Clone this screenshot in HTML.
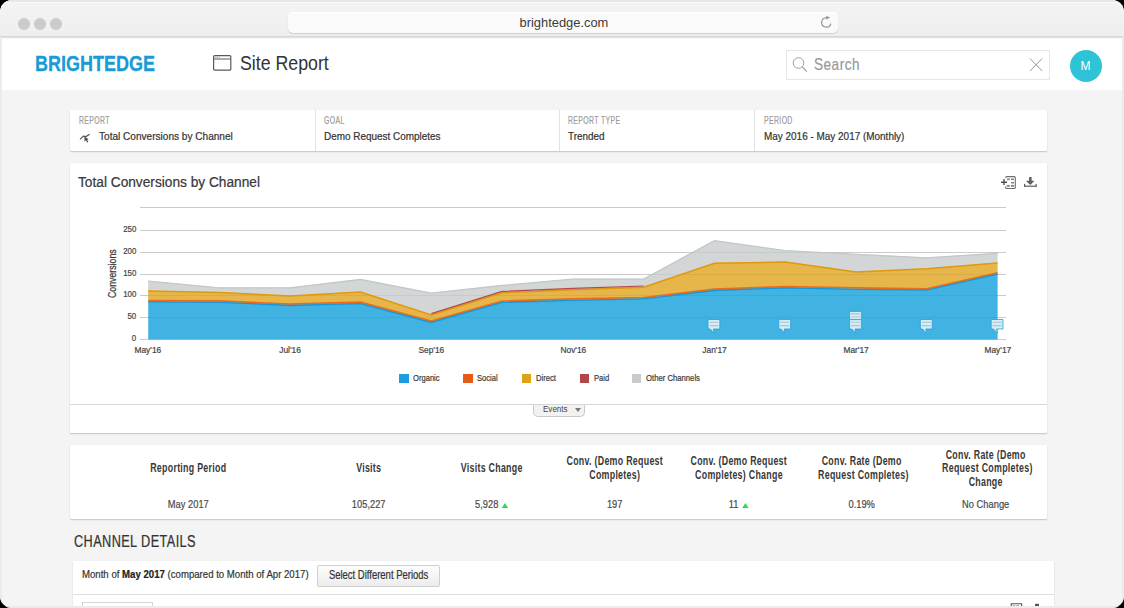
<!DOCTYPE html>
<html><head><meta charset="utf-8">
<style>
*{margin:0;padding:0;box-sizing:border-box}
html,body{width:1124px;height:608px;overflow:hidden;background:#000}
body{font-family:"Liberation Sans",sans-serif;position:relative}
#win{position:absolute;left:0;top:0;width:1124px;height:608px;border-radius:12px;overflow:hidden;background:#f4f4f4}
.a{position:absolute}
.t{position:absolute;white-space:nowrap;line-height:1;transform-origin:0 0;-webkit-text-stroke-width:.22px}
.up{display:inline-block;width:0;height:0;border-left:4.2px solid transparent;border-right:4.2px solid transparent;border-bottom:5.2px solid #2bdc58;vertical-align:0;margin-left:1.2px;-webkit-text-stroke-width:0}
.panel{position:absolute;background:#fff;border-radius:1px;box-shadow:0 1px 1.5px rgba(0,0,0,.2),0 0 1px rgba(0,0,0,.07)}
</style></head>
<body>
<div id="win">
  <!-- title bar -->
  <div class="a" style="left:0;top:0;width:1124px;height:37px;background:linear-gradient(#f4f4f4,#eeeeee)"></div>
  <div class="a" style="left:0;top:0;width:1124px;height:1.5px;background:#e6e6e6"></div>
  <div class="a" style="left:0;top:1.5px;width:1124px;height:1px;background:#fafafa"></div>
  <div class="a" style="left:0;top:36px;width:1124px;height:1px;background:#d8d8d8"></div>
  <div class="a" style="left:0;top:37px;width:1124px;height:1px;background:#e3e3e3"></div>
  <div class="a" style="left:0;top:38px;width:1124px;height:1px;background:#f6f6f6"></div>
  <div class="a" style="left:18px;top:18px;width:12px;height:12px;border-radius:6px;background:#cbcbcb"></div>
  <div class="a" style="left:34px;top:18px;width:12px;height:12px;border-radius:6px;background:#cbcbcb"></div>
  <div class="a" style="left:50px;top:18px;width:12px;height:12px;border-radius:6px;background:#cbcbcb"></div>
  <div class="a" style="left:288px;top:12px;width:550px;height:21px;border-radius:5px;background:#fafafa;box-shadow:0 1px 1px rgba(0,0,0,.14),inset 0 1px 0 #fff"></div>
  <div class="t" style="left:519.5px;top:17.1px;font-size:12.9px;color:#3a3a3a;-webkit-text-stroke-width:0">brightedge.com</div>
  <svg class="a" style="left:818px;top:13px" width="18" height="18" viewBox="0 0 18 18">
    <path d="M12.9,10.6 A4.7,4.7 0 1 1 8.4,4.7" fill="none" stroke="#8f8f8f" stroke-width="1.1"/>
    <path d="M8.2,2.9 L12.2,4.6 L8.2,6.5 Z" fill="#8f8f8f"/>
  </svg>

  <!-- app header -->
  <div class="a" style="left:0;top:39px;width:1124px;height:51px;background:#fff"></div>
  <div class="t" style="left:35.2px;top:52.45px;font-size:22.8px;font-weight:bold;color:#1a9ad6;-webkit-text-stroke:.3px #1a9ad6;transform:scaleX(.789)">BRIGHTEDGE</div>
  <svg class="a" style="left:212px;top:54px" width="21" height="18" viewBox="0 0 21 18">
    <rect x="1.6" y="1.6" width="17.2" height="14.6" rx="1" fill="none" stroke="#5a5a5a" stroke-width="1.2"/>
    <path d="M1.6 5 H18.8" stroke="#5a5a5a" stroke-width="1.1"/>
    <path d="M3.4 3.3 H4.3 M5.1 3.3 H6 M6.8 3.3 H7.7" stroke="#777" stroke-width="0.9"/>
  </svg>
  <div class="t" style="left:240px;top:54.3px;font-size:19.5px;color:#333;-webkit-text-stroke-width:0;transform:scaleX(.91)">Site Report</div>
  <div class="a" style="left:786px;top:50px;width:264px;height:30px;border:1px solid #e6e6e6;background:#fff"></div>
  <svg class="a" style="left:790px;top:54px" width="20" height="20" viewBox="0 0 20 20">
    <circle cx="8.5" cy="9" r="5.3" fill="none" stroke="#a0a0a0" stroke-width="1"/>
    <path d="M12.3 13 L16.9 17.6" stroke="#a0a0a0" stroke-width="1.1"/>
  </svg>
  <div class="t" style="left:814.3px;top:55.6px;font-size:17px;color:#999;letter-spacing:.6px;transform:scaleX(.8)">Search</div>
  <svg class="a" style="left:1028px;top:57px" width="16" height="16" viewBox="0 0 16 16">
    <path d="M2 1.5 L14.3 14 M14.3 1.5 L2 14" stroke="#999" stroke-width="1"/>
  </svg>
  <div class="a" style="left:1070px;top:50px;width:32px;height:32px;border-radius:16px;background:#2fc3d8"></div>
  <div class="t" style="left:1080.5px;top:60px;font-size:12px;color:#fff;-webkit-text-stroke-width:0">M</div>

  <!-- report info panel -->
  <div class="panel" style="left:70px;top:110px;width:977px;height:41px"></div>
  <div class="a" style="left:315px;top:110px;width:1px;height:41px;background:#e2e2e2"></div>
  <div class="a" style="left:559px;top:110px;width:1px;height:41px;background:#e2e2e2"></div>
  <div class="a" style="left:754px;top:110px;width:1px;height:41px;background:#e2e2e2"></div>
  <div class="t" style="left:79px;top:116.4px;font-size:10px;color:#9c9c9c;letter-spacing:.6px;transform:scaleX(.685)">REPORT</div>
  <div class="t" style="left:323.5px;top:116.4px;font-size:10px;color:#9c9c9c;letter-spacing:.6px;transform:scaleX(.685)">GOAL</div>
  <div class="t" style="left:568px;top:116.4px;font-size:10px;color:#9c9c9c;letter-spacing:.6px;transform:scaleX(.685)">REPORT TYPE</div>
  <div class="t" style="left:763.5px;top:116.4px;font-size:10px;color:#9c9c9c;letter-spacing:.6px;transform:scaleX(.685)">PERIOD</div>
  <svg class="a" style="left:74px;top:126px" width="24" height="22" viewBox="0 0 24 22">
    <polyline points="6,13.4 9.4,10.1 12,10.5 15.6,8.3" fill="none" stroke="#555" stroke-width="1.2"/>
    <path d="M10.4,10.6 L10.5,15.5 L11.9,14.2 L13.2,16.6 L14.3,16 L13,13.7 L14.8,13.4 Z" fill="#4a4a4a"/>
  </svg>
  <div class="t" style="left:98.5px;top:130.5px;font-size:11.2px;color:#333;transform:scaleX(.90)">Total Conversions by Channel</div>
  <div class="t" style="left:323.8px;top:130.5px;font-size:11.2px;color:#333;transform:scaleX(.888)">Demo Request Completes</div>
  <div class="t" style="left:568px;top:130.5px;font-size:11.2px;color:#333;transform:scaleX(.888)">Trended</div>
  <div class="t" style="left:763.7px;top:130.5px;font-size:11.2px;color:#333;transform:scaleX(.889)">May 2016 - May 2017 (Monthly)</div>

  <!-- chart panel -->
  <div class="panel" style="left:70px;top:163px;width:977px;height:270px"></div>
  <div class="t" style="left:78.4px;top:174.6px;font-size:14.9px;color:#383838;transform:scaleX(.92)">Total Conversions by Channel</div>
  <svg class="a" style="left:1000px;top:174px" width="18" height="16" viewBox="0 0 18 16">
    <rect x="5.7" y="2.6" width="9.6" height="11.9" rx="1" fill="none" stroke="#6e6e6e" stroke-width="1.1"/>
    <rect x="4.5" y="3.9" width="2.2" height="8.4" fill="#fff"/>
    <g fill="#858585"><rect x="7" y="4.5" width="2.8" height="1.6"/><rect x="11" y="4.5" width="3" height="1.6"/><rect x="11" y="8" width="3" height="1.5"/><rect x="7" y="10.9" width="2.8" height="1.9"/><rect x="11" y="10.9" width="3" height="1.9"/></g>
    <path d="M1,8.3 H7.1 M4,5 V11.1" stroke="#505050" stroke-width="1.4"/>
  </svg>
  <svg class="a" style="left:1022px;top:175px" width="16" height="14" viewBox="0 0 16 14">
    <g fill="#5e5e5e"><rect x="7.1" y="2" width="2.5" height="4"/><path d="M4,5.7 L12.5,5.7 L8.35,9.9 Z"/><rect x="2" y="8.9" width="1.2" height="2.9"/><rect x="2" y="10.6" width="12.7" height="1.2"/><rect x="13.5" y="8.9" width="1.2" height="2.9"/></g>
  </svg>
  <svg class="a" style="left:0;top:0" width="1124" height="608" viewBox="0 0 1124 608">
  <g stroke="#d6d6d6" stroke-width="1"><line x1="140" y1="339.5" x2="1006" y2="339.5"/><line x1="140" y1="317.5" x2="1006" y2="317.5"/><line x1="140" y1="295.5" x2="1006" y2="295.5"/><line x1="140" y1="274.5" x2="1006" y2="274.5"/><line x1="140" y1="252.5" x2="1006" y2="252.5"/><line x1="140" y1="230.5" x2="1006" y2="230.5"/><line x1="140" y1="207.5" x2="1006" y2="207.5"/></g>
  <path d="M148.2,280.8 219.0,287.5 289.8,287.5 360.5,279.2 431.3,292.9 502.1,285.2 572.9,278.8 643.7,278.8 714.4,240.3 785.2,250.4 856.0,254.0 926.8,257.5 997.6,253.0 L997.6,262.4 926.8,268.3 856.0,271.6 785.2,261.6 714.4,262.8 643.7,286.8 572.9,289.2 502.1,292.2 431.3,314.4 360.5,291.5 289.8,295.5 219.0,292.0 148.2,290.4 Z" fill="#d3d6d7"/>
  <path d="M148.2,290.4 219.0,292.0 289.8,295.5 360.5,291.5 431.3,314.4 502.1,292.2 572.9,289.2 643.7,286.8 714.4,262.8 785.2,261.6 856.0,271.6 926.8,268.3 997.6,262.4 L997.6,273.3 926.8,289.3 856.0,288.4 785.2,287.0 714.4,289.6 643.7,298.0 572.9,299.4 502.1,301.5 431.3,321.6 360.5,302.7 289.8,304.6 219.0,301.4 148.2,301.0 Z" fill="#e6b64b"/>
  <path d="M148.2,339.5 L148.2,301.0 219.0,301.4 289.8,304.6 360.5,302.7 431.3,321.6 502.1,301.5 572.9,299.4 643.7,298.0 714.4,289.6 785.2,287.0 856.0,288.4 926.8,289.3 997.6,273.3 L997.6,339.5 Z" fill="#41b3e2"/>
  <g stroke="#000" stroke-opacity=".05" stroke-width="1"><line x1="140" y1="339.5" x2="1006" y2="339.5"/><line x1="140" y1="317.5" x2="1006" y2="317.5"/><line x1="140" y1="295.5" x2="1006" y2="295.5"/><line x1="140" y1="274.5" x2="1006" y2="274.5"/><line x1="140" y1="252.5" x2="1006" y2="252.5"/><line x1="140" y1="230.5" x2="1006" y2="230.5"/><line x1="140" y1="207.5" x2="1006" y2="207.5"/></g>
  <polyline points="148.2,281.1 219.0,287.8 289.8,287.8 360.5,279.5 431.3,293.2 502.1,285.5 572.9,279.1 643.7,279.1 714.4,240.6 785.2,250.7 856.0,254.3 926.8,257.8 997.6,253.3" fill="none" stroke="#c3c7c8" stroke-width="1.3"/>
  <polyline points="148.2,290.9 219.0,292.5 289.8,296.0 360.5,292.0 431.3,314.9 502.1,292.7 572.9,289.7 643.7,287.3 714.4,263.3 785.2,262.1 856.0,272.1 926.8,268.8 997.6,262.9" fill="none" stroke="#e0980e" stroke-width="1.5"/>
  <polyline points="431.3,313.6 502.1,291.4 572.9,288.4 643.7,286.0" fill="none" stroke="#b5484a" stroke-width="1.2"/>
  <polyline points="148.2,300.5 219.0,300.9 289.8,304.1 360.5,302.2 431.3,321.1 502.1,301.0 572.9,298.9 643.7,297.5 714.4,289.1 785.2,286.5 856.0,287.9 926.8,288.8 997.6,272.8" fill="none" stroke="#ec6c1c" stroke-width="1.7"/>
  <polyline points="148.2,301.9 219.0,302.3 289.8,305.5 360.5,303.6 431.3,322.5 502.1,302.4 572.9,300.3 643.7,298.9 714.4,290.5 785.2,287.9 856.0,289.3 926.8,290.2 997.6,274.2" fill="none" stroke="#1a96d6" stroke-width="1.3"/>
  <g transform="translate(708.0,319.5)"><path d="M0,0 H11.8 V9.5 H5.4 L6.1,13.8 L2.2,9.5 H0 Z" fill="#d3eef9" stroke="#2a9fd8" stroke-width="0.8"/><path d="M1.4,2.7 H10.4 M1.4,6.1 H10.4" stroke="#b4c4cb" stroke-width="1.1"/></g><g transform="translate(778.8,319.5)"><path d="M0,0 H11.8 V9.5 H5.4 L6.1,13.8 L2.2,9.5 H0 Z" fill="#d3eef9" stroke="#2a9fd8" stroke-width="0.8"/><path d="M1.4,2.7 H10.4 M1.4,6.1 H10.4" stroke="#b4c4cb" stroke-width="1.1"/></g><g transform="translate(849.6,319.5)"><path d="M0,0 H11.8 V9.5 H5.4 L6.1,13.8 L2.2,9.5 H0 Z" fill="#d3eef9" stroke="#2a9fd8" stroke-width="0.8"/><path d="M1.4,2.7 H10.4 M1.4,6.1 H10.4" stroke="#b4c4cb" stroke-width="1.1"/></g><g transform="translate(920.4,319.5)"><path d="M0,0 H11.8 V9.5 H5.4 L6.1,13.8 L2.2,9.5 H0 Z" fill="#d3eef9" stroke="#2a9fd8" stroke-width="0.8"/><path d="M1.4,2.7 H10.4 M1.4,6.1 H10.4" stroke="#b4c4cb" stroke-width="1.1"/></g><g transform="translate(991.2,319.5)"><path d="M0,0 H11.8 V9.5 H5.4 L6.1,13.8 L2.2,9.5 H0 Z" fill="#d3eef9" stroke="#2a9fd8" stroke-width="0.8"/><path d="M1.4,2.7 H10.4 M1.4,6.1 H10.4" stroke="#b4c4cb" stroke-width="1.1"/></g><g transform="translate(849.6,311.4)"><path d="M0,0 H11.8 V8.2 H0 Z" fill="#d3eef9" stroke="#2a9fd8" stroke-width="0.8"/><path d="M1.4,2.5 H10.4 M1.4,5.6 H10.4" stroke="#b4c4cb" stroke-width="1.1"/></g>
  </svg>

  <div class="t" style="left:108.1px;top:297.8px;font-size:10px;color:#3a3a3a;-webkit-text-stroke:.25px #3a3a3a;transform:rotate(-90deg) scaleX(.875)">Conversions</div>
  <div class="t" style="left:108.2px;width:80px;text-align:center;top:345.8px;font-size:9.3px;color:#444"><span style="display:inline-block;transform:scaleX(.9)">May'16</span></div>
  <div class="t" style="left:249.8px;width:80px;text-align:center;top:345.8px;font-size:9.3px;color:#444"><span style="display:inline-block;transform:scaleX(.9)">Jul'16</span></div>
  <div class="t" style="left:391.3px;width:80px;text-align:center;top:345.8px;font-size:9.3px;color:#444"><span style="display:inline-block;transform:scaleX(.9)">Sep'16</span></div>
  <div class="t" style="left:532.9px;width:80px;text-align:center;top:345.8px;font-size:9.3px;color:#444"><span style="display:inline-block;transform:scaleX(.9)">Nov'16</span></div>
  <div class="t" style="left:674.4px;width:80px;text-align:center;top:345.8px;font-size:9.3px;color:#444"><span style="display:inline-block;transform:scaleX(.9)">Jan'17</span></div>
  <div class="t" style="left:816.0px;width:80px;text-align:center;top:345.8px;font-size:9.3px;color:#444"><span style="display:inline-block;transform:scaleX(.9)">Mar'17</span></div>
  <div class="t" style="left:957.6px;width:80px;text-align:center;top:345.8px;font-size:9.3px;color:#444"><span style="display:inline-block;transform:scaleX(.9)">May'17</span></div>
  <div class="t" style="left:96px;width:40px;text-align:right;top:333.8px;font-size:9.2px;color:#444"><span style="display:inline-block;transform:scaleX(.86);transform-origin:100% 0">0</span></div>
  <div class="t" style="left:96px;width:40px;text-align:right;top:311.8px;font-size:9.2px;color:#444"><span style="display:inline-block;transform:scaleX(.86);transform-origin:100% 0">50</span></div>
  <div class="t" style="left:96px;width:40px;text-align:right;top:289.8px;font-size:9.2px;color:#444"><span style="display:inline-block;transform:scaleX(.86);transform-origin:100% 0">100</span></div>
  <div class="t" style="left:96px;width:40px;text-align:right;top:268.8px;font-size:9.2px;color:#444"><span style="display:inline-block;transform:scaleX(.86);transform-origin:100% 0">150</span></div>
  <div class="t" style="left:96px;width:40px;text-align:right;top:246.8px;font-size:9.2px;color:#444"><span style="display:inline-block;transform:scaleX(.86);transform-origin:100% 0">200</span></div>
  <div class="t" style="left:96px;width:40px;text-align:right;top:224.8px;font-size:9.2px;color:#444"><span style="display:inline-block;transform:scaleX(.86);transform-origin:100% 0">250</span></div>
  <div class="a" style="left:399.4px;top:373.8px;width:9.3px;height:9px;background:#1b9ddf"></div>
  <div class="t" style="left:413.4px;top:372.7px;font-size:9.5px;color:#3a3a3a;transform:scaleX(0.800)">Organic</div>
  <div class="a" style="left:463.4px;top:373.8px;width:9.3px;height:9px;background:#e65a14"></div>
  <div class="t" style="left:477.3px;top:372.7px;font-size:9.5px;color:#3a3a3a;transform:scaleX(0.800)">Social</div>
  <div class="a" style="left:521.9px;top:373.8px;width:9.3px;height:9px;background:#dea118"></div>
  <div class="t" style="left:536px;top:372.7px;font-size:9.5px;color:#3a3a3a;transform:scaleX(0.800)">Direct</div>
  <div class="a" style="left:579.8px;top:373.8px;width:9.3px;height:9px;background:#b0474a"></div>
  <div class="t" style="left:593.5px;top:372.7px;font-size:9.5px;color:#3a3a3a;transform:scaleX(0.800)">Paid</div>
  <div class="a" style="left:632px;top:373.8px;width:9.3px;height:9px;background:#c8cccc"></div>
  <div class="t" style="left:645.6px;top:372.7px;font-size:9.5px;color:#3a3a3a;transform:scaleX(0.811)">Other Channels</div>

  <div class="a" style="left:70px;top:404px;width:977px;height:1px;background:#d6d6d6"></div>
  <div class="a" style="left:533.3px;top:405px;width:51.5px;height:11.5px;border:1px solid #c9c9c9;border-top:none;border-radius:0 0 5px 5px;background:#f2f2f2"></div>
  <div class="t" style="left:542.6px;top:405px;font-size:8.4px;color:#444;-webkit-text-stroke-width:0;transform:scaleX(.96)">Events</div>
  <div class="a" style="left:575px;top:408.3px;width:0;height:0;border-left:3.2px solid transparent;border-right:3.2px solid transparent;border-top:4.2px solid #777"></div>

  <!-- table panel -->
  <div class="panel" style="left:70px;top:445px;width:977px;height:74px"></div>
  <div class="t" style="left:70.0px;width:236.6px;text-align:center;top:461.9px;font-size:12.5px;line-height:13.5px;font-weight:bold;color:#383838;letter-spacing:.4px;-webkit-text-stroke-width:0"><div style="transform:scaleX(.707);transform-origin:50% 0">Reporting Period</div></div>
  <div class="t" style="left:70.0px;width:236.6px;text-align:center;top:498.8px;font-size:11.5px;color:#4a4a4a"><div style="transform:scaleX(.81);transform-origin:50% 0">May 2017</div></div>
  <div class="t" style="left:306.6px;width:123.4px;text-align:center;top:461.9px;font-size:12.5px;line-height:13.5px;font-weight:bold;color:#383838;letter-spacing:.4px;-webkit-text-stroke-width:0"><div style="transform:scaleX(.707);transform-origin:50% 0">Visits</div></div>
  <div class="t" style="left:306.6px;width:123.4px;text-align:center;top:498.8px;font-size:11.5px;color:#4a4a4a"><div style="transform:scaleX(.81);transform-origin:50% 0">105,227</div></div>
  <div class="t" style="left:430.0px;width:123.4px;text-align:center;top:461.9px;font-size:12.5px;line-height:13.5px;font-weight:bold;color:#383838;letter-spacing:.4px;-webkit-text-stroke-width:0"><div style="transform:scaleX(.707);transform-origin:50% 0">Visits Change</div></div>
  <div class="t" style="left:430.0px;width:123.4px;text-align:center;top:498.8px;font-size:11.5px;color:#4a4a4a"><div style="transform:scaleX(.81);transform-origin:50% 0">5,928 <span class="up"></span></div></div>
  <div class="t" style="left:553.4px;width:123.4px;text-align:center;top:455.3px;font-size:12.5px;line-height:13.5px;font-weight:bold;color:#383838;letter-spacing:.4px;-webkit-text-stroke-width:0"><div style="transform:scaleX(.707);transform-origin:50% 0"><span style="position:relative;left:-6.5px">Conv. (Demo Request</span><br>Completes)</div></div>
  <div class="t" style="left:553.4px;width:123.4px;text-align:center;top:498.8px;font-size:11.5px;color:#4a4a4a"><div style="transform:scaleX(.81);transform-origin:50% 0">197</div></div>
  <div class="t" style="left:676.8px;width:123.4px;text-align:center;top:455.3px;font-size:12.5px;line-height:13.5px;font-weight:bold;color:#383838;letter-spacing:.4px;-webkit-text-stroke-width:0"><div style="transform:scaleX(.707);transform-origin:50% 0"><span style="position:relative;left:-6.5px">Conv. (Demo Request</span><br>Completes) Change</div></div>
  <div class="t" style="left:676.8px;width:123.4px;text-align:center;top:498.8px;font-size:11.5px;color:#4a4a4a"><div style="transform:scaleX(.81);transform-origin:50% 0">11 <span class="up"></span></div></div>
  <div class="t" style="left:800.2px;width:123.4px;text-align:center;top:455.3px;font-size:12.5px;line-height:13.5px;font-weight:bold;color:#383838;letter-spacing:.4px;-webkit-text-stroke-width:0"><div style="transform:scaleX(.707);transform-origin:50% 0">Conv. Rate (Demo<br>Request Completes)</div></div>
  <div class="t" style="left:800.2px;width:123.4px;text-align:center;top:498.8px;font-size:11.5px;color:#4a4a4a"><div style="transform:scaleX(.81);transform-origin:50% 0">0.19%</div></div>
  <div class="t" style="left:923.6px;width:123.4px;text-align:center;top:448.6px;font-size:12.5px;line-height:13.5px;font-weight:bold;color:#383838;letter-spacing:.4px;-webkit-text-stroke-width:0"><div style="transform:scaleX(.707);transform-origin:50% 0">Conv. Rate (Demo<br>Request Completes)<br>Change</div></div>
  <div class="t" style="left:923.6px;width:123.4px;text-align:center;top:498.8px;font-size:11.5px;color:#4a4a4a"><div style="transform:scaleX(.81);transform-origin:50% 0">No Change</div></div>

  <!-- channel details -->
  <div class="t" style="left:74px;top:533.9px;font-size:15.6px;color:#333;letter-spacing:.5px;transform:scaleX(.815)">CHANNEL DETAILS</div>
  <div class="panel" style="left:73px;top:561px;width:981px;height:60px"></div>
  <div class="a" style="left:73px;top:593.5px;width:981px;height:1px;background:#dedede"></div>
  <div class="t" style="left:82px;top:569px;font-size:11.5px;color:#333;transform:scaleX(.836)">Month of <b style="color:#222">May 2017</b> (compared to Month of Apr 2017)</div>
  <div class="a" style="left:317.3px;top:564.7px;width:122.7px;height:22.2px;border:1px solid #cfcfcf;border-radius:2px;background:linear-gradient(#fdfdfd,#ececec)"></div>
  <div class="t" style="left:316.3px;width:122.7px;text-align:center;top:569.2px;font-size:12px;color:#333"><div style="transform:scaleX(.79);transform-origin:50% 0">Select Different Periods</div></div>
  <div class="a" style="left:82px;top:602px;width:71px;height:10px;border:1px solid #d5d5d5;background:#fff"></div>
  <svg class="a" style="left:1005px;top:600px" width="40" height="8" viewBox="0 0 40 8">
    <path d="M6.2,8 V3.7 H16.6 V8" fill="none" stroke="#555" stroke-width="1.1"/>
    <path d="M7.8,6 H10.2 M11.4,6 H13.8" stroke="#888" stroke-width="1.3"/>
    <path d="M3,7 H6" stroke="#666" stroke-width="1"/>
    <rect x="30" y="3.8" width="4" height="2.6" fill="#555"/>
  </svg>
  <div class="a" style="left:0;top:606px;width:1124px;height:2px;background:#ebebeb"></div>
  <div class="a" style="left:0;top:37px;width:2px;height:571px;background:#ebebeb"></div>
  <div class="a" style="left:1122px;top:37px;width:2px;height:571px;background:#ebebeb"></div>
</div>
</body></html>
